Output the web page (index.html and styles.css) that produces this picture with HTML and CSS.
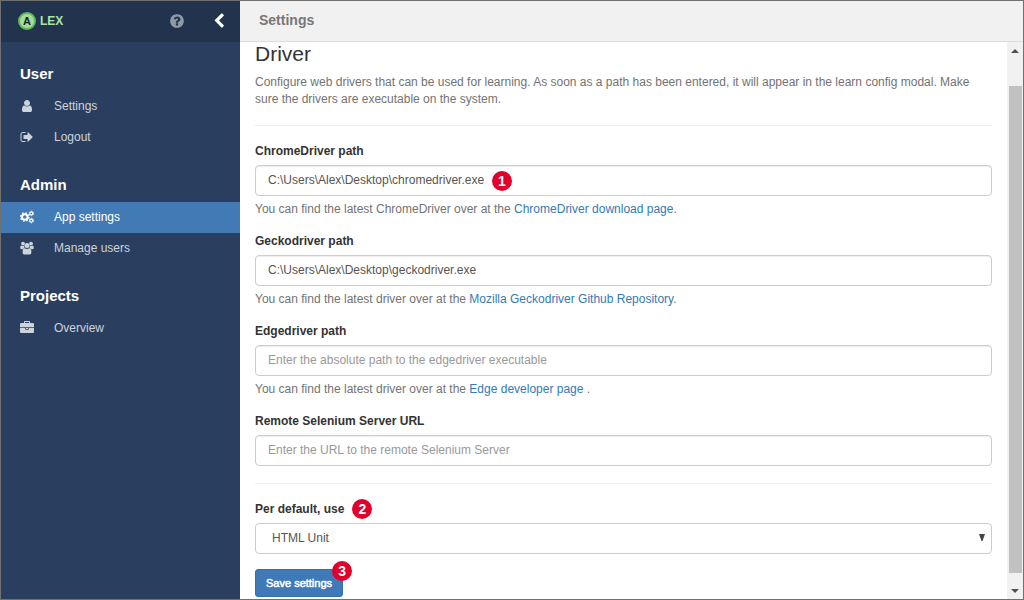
FILE: index.html
```html
<!DOCTYPE html>
<html lang="en">
<head>
<meta charset="utf-8">
<title>ALEX - Settings</title>
<link rel="stylesheet" href="styles.css">
</head>
<body>
<div class="app">
  <aside class="sidebar">
    <header class="sidebar-header">
      <a class="brand" href="#"><span class="brand-mark">A</span>LEX</a>
      <button class="icon-button help" type="button" aria-label="Help">
        <svg class="icon-help" viewBox="0 0 1792 1792"><path d="M1024 1376v-192q0-14-9-23t-23-9h-192q-14 0-23 9t-9 23v192q0 14 9 23t23 9h192q14 0 23-9t9-23zm256-672q0-88-55.500-163t-138.500-116-170-41q-243 0-371 213-15 24 8 42l132 100q7 6 19 6 16 0 25-12 53-68 86-92 34-24 86-24 48 0 85.500 26t37.500 59q0 38-20 61t-68 45q-63 28-115.500 86.500t-52.500 125.500v36q0 14 9 23t23 9h192q14 0 23-9t9-23q0-19 21.500-49.500t54.500-49.500q32-18 49-28.500t46-35 44.500-48 28-60.500 12.500-81zm384 192q0 209-103 385.500t-279.500 279.500-385.500 103-385.500-103-279.500-279.500-103-385.500 103-385.500 279.500-279.500 385.500-103 385.500 103 279.500 279.500 103 385.500z"/></svg>
      </button>
      <button class="icon-button collapse" type="button" aria-label="Collapse sidebar">
        <svg class="icon-collapse" viewBox="0 0 1792 1792"><path d="M1427 301l-531 531 531 531q19 19 19 45t-19 45l-166 166q-19 19-45 19t-45-19l-742-742q-19-19-19-45t19-45l742-742q19-19 45-19t45 19l166 166q19 19 19 45t-19 45z"/></svg>
      </button>
    </header>
    <nav>
      <h2 class="nav-title">User</h2>
      <a class="nav-item" href="#"><svg class="nav-icon" viewBox="0 0 1792 1792"><path d="M1536 1399q0 109-62.500 187t-150.500 78h-854q-88 0-150.500-78t-62.500-187q0-85 8.500-160.500t31.500-152 58.500-131 94-89 134.500-34.500q131 128 313 128t313-128q76 0 134.500 34.500t94 89 58.500 131 31.500 152 8.500 160.500zm-256-887q0 159-112.500 271.500t-271.500 112.500-271.500-112.500-112.500-271.500 112.500-271.500 271.500-112.500 271.500 112.500 112.500 271.500z"/></svg>Settings</a>
      <a class="nav-item" href="#"><svg class="nav-icon" viewBox="0 0 1792 1792"><path d="M704 1440q0 4 1 20t.5 26.500-3 23.500-10 19.500-20.500 6.500h-320q-119 0-203.500-84.500t-84.500-203.500v-704q0-119 84.500-203.500t203.500-84.500h320q13 0 22.500 9.500t9.500 22.500q0 4 1 20t.5 26.500-3 23.500-10 19.500-20.500 6.500h-320q-66 0-113 47t-47 113v704q0 66 47 113t113 47h312l11.500 1 11.500 3 8 5.500 7 9 2 13.500zm928-544q0 26-19 45l-544 544q-19 19-45 19t-45-19-19-45v-288h-448q-26 0-45-19t-19-45v-384q0-26 19-45t45-19h448v-288q0-26 19-45t45-19 45 19l544 544q19 19 19 45z"/></svg>Logout</a>
      <h2 class="nav-title">Admin</h2>
      <a class="nav-item active" href="#"><svg class="nav-icon" viewBox="0 0 14 14"><g fill="none" stroke="currentColor"><circle cx="4.800" cy="7" r="2.800" stroke-width="2"/><circle cx="4.800" cy="7" r="4.200" stroke-width="1.300" stroke-dasharray="1.650 1.650"/><circle cx="11.300" cy="3.400" r="1.500" stroke-width="1.200"/><circle cx="11.300" cy="3.400" r="2.300" stroke-width=".9" stroke-dasharray="1.200 1.200"/><circle cx="11.300" cy="10.600" r="1.500" stroke-width="1.200"/><circle cx="11.300" cy="10.600" r="2.300" stroke-width=".9" stroke-dasharray="1.200 1.200"/></g></svg>App settings</a>
      <a class="nav-item" href="#"><svg class="nav-icon" viewBox="0 0 14 14"><circle cx="3" cy="2.600" r="1.900"/><circle cx="11" cy="2.600" r="1.900"/><path d="M.3 7.200V6q0-1.600 1.100-1.600.7.600 1.600.6.500 0 1-.2-.1 1.300.7 2.400-1.200 0-1.900 1H1.600Q.3 8.200.3 7.200zM13.700 7.200V6q0-1.600-1.100-1.600-.7.600-1.600.6-.5 0-1-.2.100 1.300-.7 2.400 1.200 0 1.900 1h1.200q1.300 0 1.300-1z"/><circle cx="7" cy="4.600" r="2.500"/><path d="M4.700 7.200Q5.700 8 7 8t2.300-.8q2.100.1 2.100 4.200 0 2-1.700 2H4.300q-1.700 0-1.700-2 0-4.100 2.100-4.200z"/></svg>Manage users</a>
      <h2 class="nav-title">Projects</h2>
      <a class="nav-item" href="#"><svg class="nav-icon" viewBox="0 0 1792 1792"><path d="M640 256h512v-128h-512v128zm1152 640v480q0 66-47 113t-113 47h-1472q-66 0-113-47t-47-113v-480h672v160q0 26 19 45t45 19h320q26 0 45-19t19-45v-160h672zm-768 0v128h-256v-128h256zm768-480v384h-1792v-384q0-66 47-113t113-47h352v-160q0-40 28-68t68-28h576q40 0 68 28t28 68v160h352q66 0 113 47t47 113z"/></svg>Overview</a>
    </nav>
  </aside>
  <main class="main">
    <h1 class="topbar">Settings</h1>
    <div class="viewport">
      <form class="content">
        <h2 class="title">Driver</h2>
        <p class="intro">Configure web drivers that can be used for learning. As soon as a path has been entered, it will appear in the learn config modal. Make sure the drivers are executable on the system.</p>
        <hr class="rule">
        <div class="group">
          <label class="label" for="chrome">ChromeDriver path</label>
          <div class="field">
            <input class="control" id="chrome" type="text" value="C:\Users\Alex\Desktop\chromedriver.exe">
            <span class="badge badge-field">1</span>
          </div>
          <p class="hint">You can find the latest ChromeDriver over at the <a href="#">ChromeDriver download page</a>.</p>
        </div>
        <div class="group">
          <label class="label" for="gecko">Geckodriver path</label>
          <input class="control" id="gecko" type="text" value="C:\Users\Alex\Desktop\geckodriver.exe">
          <p class="hint">You can find the latest driver over at the <a href="#">Mozilla Geckodriver Github Repository</a>.</p>
        </div>
        <div class="group">
          <label class="label" for="edge">Edgedriver path</label>
          <input class="control" id="edge" type="text" placeholder="Enter the absolute path to the edgedriver executable">
          <p class="hint">You can find the latest driver over at the <a href="#">Edge developer page</a> .</p>
        </div>
        <div>
          <label class="label" for="remote">Remote Selenium Server URL</label>
          <input class="control" id="remote" type="text" placeholder="Enter the URL to the remote Selenium Server">
        </div>
        <hr class="rule">
        <div class="group">
          <label class="label" for="default">Per default, use<span class="badge badge-label">2</span></label>
          <div class="field">
            <select class="control select" id="default"><option>HTML Unit</option></select>
            <svg class="caret" viewBox="0 0 6 7"><path d="M0 0h6L3.500 7h-1z"/></svg>
          </div>
        </div>
        <button class="save" type="button">Save settings<span class="badge badge-button">3</span></button>
      </form>
      <div class="scrollbar" aria-hidden="true">
        <svg class="arrow" viewBox="0 0 16 17"><path d="M4 11l4-4 4 4z"/></svg>
        <div class="gap-before"></div>
        <div class="thumb"></div>
        <div class="gap-after"></div>
        <svg class="arrow" viewBox="0 0 16 17"><path d="M4 7l4 4 4-4z"/></svg>
      </div>
    </div>
  </main>
</div>
</body>
</html>
```
FILE: styles.css
```css
* {
  box-sizing: border-box;
}

body {
  margin: 0;
  font: 12px/17px "Liberation Sans", Arial, sans-serif;
  color: #333;
  background: #fff;
}

h1, h2, p {
  margin: 0;
}

a {
  color: #337ab7;
  text-decoration: none;
}

.app {
  display: flex;
  height: 100vh;
  border: 1px solid #707070;
  overflow: hidden;
}

.sidebar {
  flex: 0 0 239px;
  background: #2a3f5f;
}

.sidebar-header {
  display: flex;
  align-items: center;
  height: 41px;
  padding: 0 13px 1px 17px;
  background: #22344d;
}

.brand {
  display: flex;
  align-items: center;
  gap: 4px;
  margin-right: auto;
  color: #a9e4a5;
  font-weight: bold;
}

.brand-mark {
  width: 18px;
  height: 18px;
  border: 2px solid #62b957;
  border-radius: 50%;
  background: #a5dc9c;
  color: #16251b;
  font-size: 11px;
  line-height: 14px;
  text-align: center;
}

.icon-button {
  display: flex;
  padding: 0;
  border: 0;
  background: none;
}

.help {
  margin-right: 26px;
}

.icon-help {
  width: 16px;
  height: 16px;
  fill: #9099a6;
}

.icon-collapse {
  width: 16px;
  height: 16px;
  fill: #fff;
}

.nav-title {
  padding: 23px 19px 8px;
  color: #fff;
  font-size: 15px;
  line-height: 18px;
}

.nav-item {
  display: flex;
  align-items: center;
  gap: 20px;
  height: 31px;
  padding: 0 19px;
  color: #cdd3dc;
}

.nav-item.active {
  background: #427ab5;
  color: #fff;
}

.nav-icon {
  width: 14px;
  height: 14px;
  margin-bottom: 2px;
  fill: currentColor;
}

.main {
  display: flex;
  flex: 1;
  flex-direction: column;
  min-width: 0;
}

.topbar {
  flex: none;
  height: 41px;
  padding: 0 19px;
  border-bottom: 1px solid #ddd;
  background: #f1f1f1;
  color: #777;
  font-size: 14px;
  line-height: 38px;
}

.viewport {
  display: flex;
  flex: 1;
  min-height: 0;
}

.content {
  flex: 1;
  min-width: 0;
  padding: 0 15px;
}

.title {
  margin-bottom: 8px;
  font-size: 21px;
  font-weight: normal;
  line-height: 24px;
}

.intro,
.hint {
  color: #737373;
}

.rule {
  margin: 17px 0 16px;
  border: 0;
  border-top: 1px solid #eee;
}

.group {
  margin-bottom: 14px;
}

.label {
  display: block;
  position: relative;
  width: max-content;
  margin-bottom: 5px;
  padding-top: 1px;
  font-weight: bold;
}

.field {
  position: relative;
}

.control {
  display: block;
  width: 100%;
  height: 31px;
  padding: 0 12px 2px;
  border: 1px solid #ccc;
  border-radius: 4px;
  background: #fff;
  box-shadow: inset 0 1px 1px rgba(0, 0, 0, 0.075);
  color: #555;
  font: inherit;
}

.control::placeholder {
  color: #999;
}

.select {
  padding: 0 16px;
  appearance: none;
  box-shadow: none;
}

.caret {
  position: absolute;
  top: 11px;
  right: 7px;
  width: 6px;
  height: 7px;
  fill: #444;
  pointer-events: none;
}

.hint {
  margin-top: 5px;
}

.save {
  position: relative;
  height: 28px;
  margin-top: 1px;
  padding: 0 10px;
  border: 1px solid #3470aa;
  border-radius: 3px;
  background: #4079b7;
  color: #fff;
  font: 11px/17px "Liberation Sans", Arial, sans-serif;
  -webkit-text-stroke: 0.5px #fff;
}

.badge {
  position: absolute;
  width: 20px;
  height: 20px;
  border-radius: 50%;
  background: #e2002b;
  color: #fff;
  font-size: 14px;
  font-weight: bold;
  line-height: 20px;
  text-align: center;
  -webkit-text-stroke: 0;
}

.badge-field {
  top: 6px;
  left: 237px;
}

.badge-label {
  top: -1px;
  left: calc(100% + 8px);
}

.badge-button {
  top: -9px;
  right: -10px;
}

.scrollbar {
  display: flex;
  flex: 0 0 16px;
  flex-direction: column;
  align-items: center;
  background: #f1f1f1;
}

.arrow {
  flex: none;
  width: 16px;
  height: 17px;
  fill: #505050;
}

.gap-before {
  flex: 27;
}

.thumb {
  flex: 487;
  width: 13px;
  background: #c1c1c1;
}

.gap-after {
  flex: 9;
}
```
